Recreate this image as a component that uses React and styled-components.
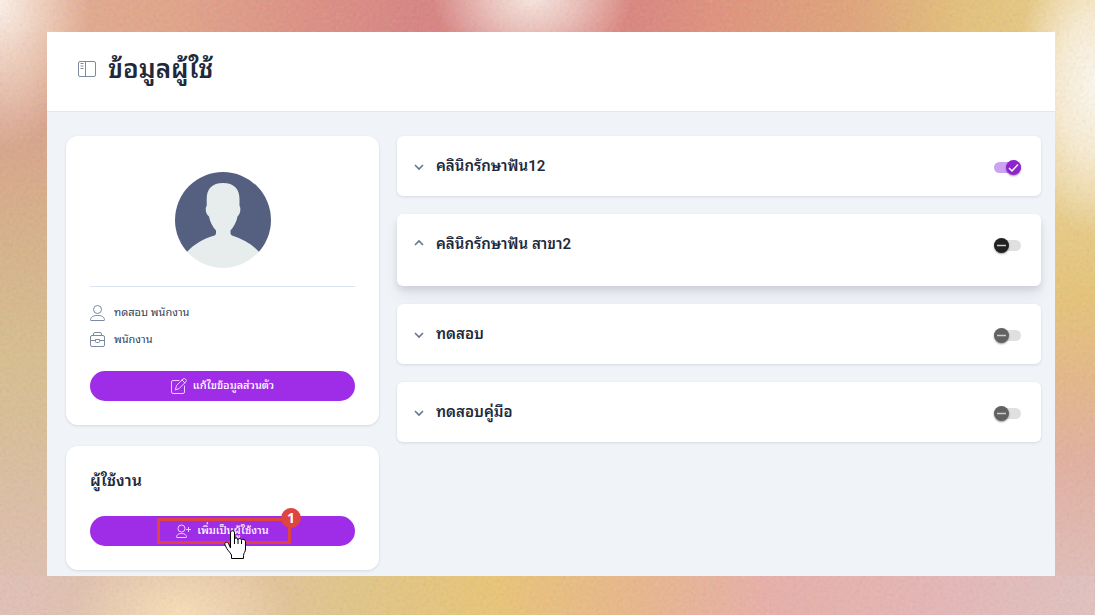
import { useState } from "react";
import styled, { createGlobalStyle } from "styled-components";

const GlobalStyle = createGlobalStyle`
  * {
    box-sizing: border-box;
  }

  body {
    margin: 0;
    color: #1e293b;
    font-family: Roboto, "Noto Sans Thai Looped", Tahoma, Loma, Waree, "Noto Sans Thai", "Noto Sans", sans-serif;
  }
`;

// warm wallpaper behind the window
const Page = styled.div`
  position: relative;
  min-height: 100vh;
  display: flex;
  padding: 32px 40px 39px 47px;
  background:
    radial-gradient(ellipse 90px 150px at 0% 0%, #fff3ea 0, rgba(255, 240, 228, 0.6) 40%, rgba(255, 240, 228, 0) 100%),
    radial-gradient(ellipse 100px 80px at 532px -6px, #fbece4 0, rgba(251, 236, 228, 0.6) 45%, rgba(251, 236, 228, 0) 100%),
    radial-gradient(ellipse 80px 150px at 100% 85px, #fffaf0 0, rgba(255, 246, 230, 0.8) 45%, rgba(255, 246, 230, 0) 100%),
    radial-gradient(ellipse 110px 70px at 180px 100%, #fbe0b6 0, rgba(251, 224, 182, 0) 100%),
    linear-gradient(90deg, #e2c0b6 0%, #e3c3a3 20%, #e3c685 32%, #ebc573 45%, #ebb688 58%, #eaaea7 70%, #e7b5b5 85%, #e2c2bf 100%) bottom / 100% 39px no-repeat,
    linear-gradient(90deg, #e3ac91 0%, #e3a487 15%, #de8e80 28%, #d98180 38%, #dc837c 58%, #e19179 66%, #e1a377 78%, #e6c178 88%, #ebd087 100%) top / 100% 32px no-repeat,
    linear-gradient(180deg, #e2a689 0%, #daa188 20%, #d8b287 40%, #d9be8c 58%, #dcbe9c 75%, #e2c0b6 100%) left / 50% 100% no-repeat,
    linear-gradient(180deg, #ebd087 0%, #ebcf8a 30%, #e8c475 48%, #e6b786 62%, #e4af9f 75%, #e2c2bf 100%) right / 50% 100% no-repeat;
`;

const Grain = styled.svg`
  position: absolute;
  inset: 0;
  width: 100%;
  height: 100%;
  opacity: 0.2;
  pointer-events: none;
`;

const Window = styled.main`
  position: relative;
  flex: 1;
  min-width: 0;
  background-color: #f0f4f8;
`;

const Header = styled.header`
  display: flex;
  align-items: center;
  gap: 12px;
  height: 80px;
  padding: 0 31px 6px;
  background-color: #fff;
  border-bottom: 1px solid #e2e8f0;
`;

const Title = styled.h1`
  margin: 0;
  font-size: 26px;
  line-height: 32px;
  font-weight: 600;
`;

const Content = styled.div`
  display: grid;
  grid-template-columns: 313px minmax(0, 1fr);
  gap: 18px;
  align-items: start;
  padding: 24px 14px 5px 19px;
`;

const Column = styled.div`
  display: flex;
  flex-direction: column;
  gap: ${(props) => props.$gap}px;
`;

const Card = styled.section`
  padding: 24px;
  background-color: #fff;
  border-radius: 12px;
  box-shadow: 0 1px 3px rgba(15, 23, 42, 0.12);
`;

const AvatarBox = styled.div`
  display: flex;
  justify-content: center;
  padding: 12px 0 18px;
  border-bottom: 1px solid #dbe2f0;
`;

const InfoList = styled.ul`
  display: flex;
  flex-direction: column;
  gap: 11px;
  margin: 0;
  padding: 18px 0 23px;
  list-style: none;
`;

const InfoItem = styled.li`
  display: flex;
  align-items: center;
  gap: 9px;
  height: 16px;
  color: #334155;
  font-size: 11px;
  line-height: 16px;
`;

const PurpleButton = styled.button`
  display: flex;
  align-items: center;
  justify-content: center;
  gap: 6px;
  width: 100%;
  height: 30px;
  padding: 0;
  border: none;
  border-radius: 15px;
  background-color: #9f2de8;
  color: #fff;
  font-family: inherit;
  font-size: 11px;
  line-height: 16px;
  font-weight: 500;
  cursor: pointer;
`;

const CardTitle = styled.h2`
  margin: 0 0 24px;
  font-size: 16px;
  line-height: 22px;
  font-weight: 600;
`;

const ButtonWrap = styled.div`
  position: relative;
`;

// red frame of the guide step
const Highlight = styled.div`
  position: absolute;
  top: 2px;
  left: 67px;
  width: 134px;
  height: 26px;
  border: 3px solid #df4440;
  pointer-events: none;
`;

const StepBadge = styled.span`
  position: absolute;
  top: -13px;
  right: -13px;
  width: 20px;
  height: 20px;
  border-radius: 50%;
  background-color: #df4440;
  color: #fff;
  font-family: "Noto Sans", sans-serif;
  font-size: 14px;
  line-height: 20px;
  font-weight: 700;
  text-align: center;
`;

const Pointer = styled.svg`
  position: absolute;
  top: 14px;
  left: 134px;
  pointer-events: none;
`;

const Branch = styled.section`
  display: flex;
  align-items: flex-start;
  justify-content: space-between;
  height: ${(props) => (props.$open ? 72 : 60)}px;
  padding: 19px 20px 0 17px;
  background-color: #fff;
  border-radius: 6px;
  box-shadow: ${(props) =>
    props.$open
      ? "0 4px 6px rgba(15, 23, 42, 0.1), 0 10px 16px rgba(15, 23, 42, 0.06)"
      : "0 1px 3px rgba(15, 23, 42, 0.12)"};
`;

const BranchToggle = styled.button`
  display: flex;
  align-items: center;
  gap: 12px;
  padding: 0;
  border: none;
  background: none;
  color: #1e293b;
  font-family: inherit;
  font-size: 15px;
  line-height: 22px;
  font-weight: 600;
  cursor: pointer;
`;

const Chevron = styled.svg`
  transform: ${(props) => (props.$open ? "rotate(180deg)" : "none")};
`;

const Switch = styled.label`
  display: flex;
  align-items: center;
  position: relative;
  width: 27px;
  height: 24px;
  cursor: pointer;
`;

const SwitchInput = styled.input`
  appearance: none;
  width: 27px;
  height: 11px;
  margin: 0;
  border-radius: 6px;
  background-color: ${(props) => (props.checked ? "#cba3f0" : "#e0e0e0")};
  cursor: pointer;
`;

const Knob = styled.span`
  position: absolute;
  top: 5px;
  left: ${(props) => (props.$on ? 12 : 0)}px;
  display: flex;
  align-items: center;
  justify-content: center;
  width: 15px;
  height: 15px;
  border-radius: 50%;
  background-color: ${(props) => props.$color};
  box-shadow: 0 1px 2px rgba(0, 0, 0, 0.4);
  pointer-events: none;
`;

const SidebarIcon = () => (
  <svg width="18" height="18" viewBox="0 0 18 18" fill="none" stroke="#7c8aa0">
    <rect x="0.5" y="1.5" width="17" height="15" rx="1.5" />
    <path d="M7.5 1.5v15M2.5 3.5h3M2.5 6h3M2.5 8.5h3" />
  </svg>
);

const Avatar = () => (
  <svg width="96" height="96" viewBox="0 0 96 96" role="img" aria-label="avatar">
    <clipPath id="avatar-clip">
      <circle cx="48" cy="48" r="48" />
    </clipPath>
    <g clipPath="url(#avatar-clip)">
      <path fill="#556080" d="M0 0h96v80H0z" />
      <path
        fill="#e7eced"
        d="M48 11c11 0 16.500 6 16.500 16v7c1.500 1.500 1.200 8-2 10.500C61.500 50 59 54.500 55.500 58.500V61c0 1.300.500 2 1.500 2.400 11 3.300 20 8.600 27.200 16.600V96H11.800V80C19 72 28.500 66.700 39.500 63.400c1-.4 1.500-1.100 1.500-2.400v-2.500C37.500 54.500 35 50 34 44.500c-3.600-2.500-4-9-2.300-10.500v-7C31.700 17 37 11 48 11z"
      />
    </g>
  </svg>
);

const UserIcon = () => (
  <svg width="15" height="16" viewBox="0 0 15 16" fill="none" stroke="#7c8aa0">
    <circle cx="7.500" cy="4.500" r="4" />
    <path d="M1 15.500c-.4 0-.6-.3-.5-.8C1 11.800 3 10.500 7.500 10.500s6.500 1.300 7 4.200c.1.500-.1.800-.5.800z" />
  </svg>
);

const BriefcaseIcon = () => (
  <svg width="15" height="16" viewBox="0 0 15 16" fill="none" stroke="#7c8aa0">
    <rect x="0.500" y="3.500" width="14" height="11" rx="1.500" />
    <path d="M3.500 3.500v-1.500A1.500 1.500 0 0 1 5 .5h5A1.500 1.500 0 0 1 11.500 2v1.500M.5 8.500h5M9.500 8.500h5M5.500 7.500h4v2a1 1 0 0 1-1 1h-2a1 1 0 0 1-1-1z" />
  </svg>
);

const EditIcon = () => (
  <svg width="16" height="16" viewBox="0 0 16 16" fill="none" stroke="#ecd0fb" strokeLinecap="round" strokeLinejoin="round">
    <path d="M8 2.500H2A1.500 1.500 0 0 0 .5 4v10A1.500 1.500 0 0 0 2 15.500h10a1.500 1.500 0 0 0 1.500-1.500V8" />
    <path d="M4.500 11.500l1-4L12 1a1.600 1.600 0 0 1 2.300 0l.500.500a1.600 1.600 0 0 1 0 2.300L8.300 10.400zM11 2l3 3" />
  </svg>
);

const AddUserIcon = () => (
  <svg width="15" height="14" viewBox="0 0 15 14" fill="none" stroke="#ecd0fb">
    <circle cx="5.500" cy="4.500" r="3.500" />
    <path d="M1 13.500c-.4 0-.6-.3-.5-.8C1 10.500 2.500 9.500 5.500 9.500s4.500 1 5 3.200c.1.500-.1.800-.5.800zM12.500 3v5M10 5.500h5" />
  </svg>
);

const branchList = [
  { name: "คลินิกรักษาฟัน12", open: false, on: true, color: "#8e24cf" },
  { name: "คลินิกรักษาฟัน สาขา2", open: true, on: false, color: "#212121" },
  { name: "ทดสอบ", open: false, on: false, color: "#616161" },
  { name: "ทดสอบคู่มือ", open: false, on: false, color: "#616161" },
];

function App() {
  const [branches, setBranches] = useState(branchList);

  const change = (index, key) => {
    setBranches(
      branches.map((item, i) =>
        i === index ? { ...item, [key]: !item[key] } : item
      )
    );
  };

  return (
    <Page>
      <GlobalStyle />
      <Grain aria-hidden="true">
        <filter id="grain">
          <feTurbulence type="fractalNoise" baseFrequency="0.3" numOctaves="3" />
        </filter>
        <rect width="100%" height="100%" filter="url(#grain)" />
      </Grain>
      <Window>
        <Header>
          <SidebarIcon />
          <Title>ข้อมูลผู้ใช้</Title>
        </Header>
        <Content>
          <Column $gap={21}>
            <Card>
              <AvatarBox>
                <Avatar />
              </AvatarBox>
              <InfoList>
                <InfoItem>
                  <UserIcon />
                  ทดสอบ พนักงาน
                </InfoItem>
                <InfoItem>
                  <BriefcaseIcon />
                  พนักงาน
                </InfoItem>
              </InfoList>
              <PurpleButton type="button">
                <EditIcon />
                แก้ไขข้อมูลส่วนตัว
              </PurpleButton>
            </Card>
            <Card>
              <CardTitle>ผู้ใช้งาน</CardTitle>
              <ButtonWrap>
                <PurpleButton type="button">
                  <AddUserIcon />
                  เพิ่มเป็นผู้ใช้งาน
                </PurpleButton>
                <Highlight>
                  <StepBadge>1</StepBadge>
                </Highlight>
                <Pointer width="23" height="30" viewBox="0 0 23 30" aria-hidden="true">
                  <path
                    fill="#fff"
                    stroke="#000"
                    d="M6.500 18V3c0-3 4-3 4 0v6.500c0-2 3.500-2 3.500.5 0-2 3.500-2 3.500.5 0-2 4-1.500 4 1V19c0 3-2 4-2 6.500v3H7.500V25C6 22 3 20 1 15c-1-3 2-3.500 3.500-1.500zM10.500 9v5M14 10v4M17.500 11v3"
                  />
                </Pointer>
              </ButtonWrap>
            </Card>
          </Column>
          <Column $gap={18}>
            {branches.map((item, index) => (
              <Branch key={item.name} $open={item.open}>
                <BranchToggle
                  type="button"
                  aria-expanded={item.open}
                  onClick={() => change(index, "open")}
                >
                  <Chevron $open={item.open} width="10" height="10" viewBox="0 0 10 10" fill="none" stroke="#64748b" strokeWidth="1.6">
                    <path d="M1 4l4 4 4-4" />
                  </Chevron>
                  {item.name}
                </BranchToggle>
                <Switch>
                  <SwitchInput
                    type="checkbox"
                    role="switch"
                    aria-label={item.name}
                    checked={item.on}
                    onChange={() => change(index, "on")}
                  />
                  <Knob $on={item.on} $color={item.color}>
                    <svg width="11" height="11" viewBox="0 0 11 11" fill="none" stroke="#fff" strokeWidth="1.5">
                      {item.on ? <path d="M1 6l3 3 6-6.500" /> : <path d="M1 5.500h9" stroke="#ccc" />}
                    </svg>
                  </Knob>
                </Switch>
              </Branch>
            ))}
          </Column>
        </Content>
      </Window>
    </Page>
  );
}

export default App;
